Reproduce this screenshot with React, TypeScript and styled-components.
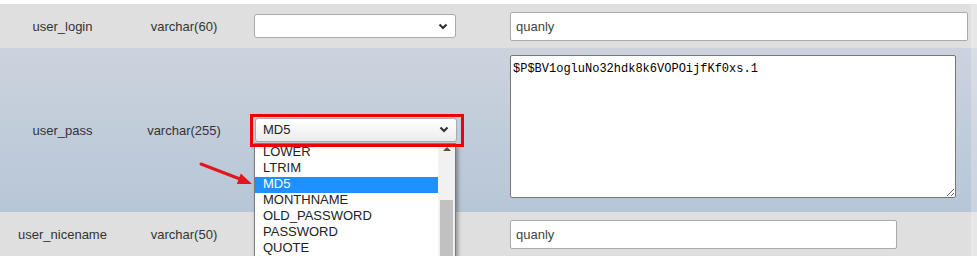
import styled, { createGlobalStyle } from 'styled-components';

const GlobalStyle = createGlobalStyle`
  html, body {
    margin: 0;
    padding: 0;
    background: #fff;
    overflow: hidden;
  }
  body {
    font-family: "Liberation Sans", Arial, sans-serif;
  }
`;

const Page = styled.div`
  width: 977px;
  padding-top: 4px;
`;

const Row = styled.div<{ $tall?: boolean }>`
  position: relative;
  display: grid;
  grid-template-columns: 125px 118px 255px 473px 6px;
  align-items: center;
  height: ${(p) => (p.$tall ? 164 : 44)}px;
  background: ${(p) => (p.$tall ? 'linear-gradient(#ccd3dd, #b7c6d7)' : '#dfdfdf')};
`;

const TextCell = styled.div`
  text-align: center;
  font-size: 13px;
  color: #333;
`;

const FuncCell = styled.div`
  position: relative;
  align-self: stretch;
  display: flex;
  align-items: center;
  padding-left: 11px;
`;

const ValueCell = styled.div<{ $top?: boolean }>`
  align-self: ${(p) => (p.$top ? 'start' : 'center')};
  padding-left: 12px;
  padding-top: ${(p) => (p.$top ? 7 : 0)}px;
`;

const EdgeCell = styled.div`
  align-self: stretch;
  background: rgba(255, 255, 255, 0.25);
`;

const SelectBox = styled.div<{ $open?: boolean }>`
  box-sizing: border-box;
  width: 202px;
  height: 24px;
  display: flex;
  align-items: center;
  justify-content: space-between;
  padding: 0 7px 0 7px;
  border: 1px solid #aaa;
  border-radius: 3px;
  background: ${(p) => (p.$open ? 'linear-gradient(#ffffff, #ececec)' : '#fff')};
  font-size: 13px;
  color: #222;
`;

const Highlight = styled.div`
  position: relative;
  z-index: 3;
  margin-left: -4px;
  padding: 1px 4px 2px 2px;
  border: 3px solid #ee0000;
`;

const Dropdown = styled.div`
  position: absolute;
  z-index: 2;
  left: 11px;
  top: 95px;
  width: 202px;
  height: 113px;
  box-sizing: border-box;
  display: flex;
  border: 1px solid #7a7a7a;
  border-bottom: none;
  background: #fff;
  box-shadow: 2px 3px 4px rgba(0, 0, 0, 0.35);
  overflow: hidden;
`;

const OptionList = styled.div`
  flex: 1;
  padding-top: 1px;
`;

const Option = styled.div<{ $selected?: boolean }>`
  height: 16px;
  line-height: 14px;
  padding-left: 8px;
  font-size: 13px;
  color: ${(p) => (p.$selected ? '#fff' : '#222')};
  background: ${(p) => (p.$selected ? '#1e90ff' : 'transparent')};
`;

const ScrollTrack = styled.div`
  width: 17px;
  display: flex;
  flex-direction: column;
  align-items: center;
  background: #f1f1f1;
`;

const ScrollArrow = styled.div`
  height: 17px;
  display: flex;
  align-items: center;
  justify-content: center;

  &::before {
    content: '';
    border-left: 4px solid transparent;
    border-right: 4px solid transparent;
    border-bottom: 4px solid #505050;
  }
`;

const ScrollThumb = styled.div`
  width: 13px;
  height: 100px;
  margin-top: 46px;
  background: #c1c1c1;
`;

const TextInput = styled.input<{ $width: number }>`
  box-sizing: border-box;
  display: block;
  width: ${(p) => p.$width}px;
  height: 29px;
  padding: 0 5px;
  border: 1px solid #aaa;
  border-radius: 2px;
  background: #fff;
  font-family: "Liberation Sans", Arial, sans-serif;
  font-size: 13px;
  color: #444;
  outline: none;
`;

const TextArea = styled.textarea`
  box-sizing: border-box;
  display: block;
  width: 446px;
  height: 143px;
  margin: 0;
  padding: 6px 2px;
  border: 1px solid #767676;
  border-radius: 2px;
  font-family: "Liberation Mono", "DejaVu Sans Mono", monospace;
  font-size: 12px;
  color: #000;
  resize: both;
  outline: none;
`;

const ArrowMark = styled.svg`
  position: absolute;
  left: 196px;
  top: 110px;
  width: 60px;
  height: 30px;
  pointer-events: none;
  z-index: 4;
`;

const Chevron = () => (
  <svg width="10" height="7" viewBox="0 0 10 7">
    <path d="M1.5 1.5 L5 5 L8.5 1.5" fill="none" stroke="#333" strokeWidth="2.2" />
  </svg>
);

const options = ['LOWER', 'LTRIM', 'MD5', 'MONTHNAME', 'OLD_PASSWORD', 'PASSWORD', 'QUOTE'];

export default function App() {
  return (
    <>
      <GlobalStyle />
      <Page>
        <Row>
          <TextCell>user_login</TextCell>
          <TextCell>varchar(60)</TextCell>
          <FuncCell>
            <SelectBox>
              <span />
              <Chevron />
            </SelectBox>
          </FuncCell>
          <ValueCell>
            <TextInput $width={458} defaultValue="quanly" readOnly />
          </ValueCell>
          <EdgeCell />
        </Row>

        <Row $tall>
          <TextCell>user_pass</TextCell>
          <TextCell>varchar(255)</TextCell>
          <FuncCell>
            <Highlight>
              <SelectBox $open>
                <span>MD5</span>
                <Chevron />
              </SelectBox>
            </Highlight>
            <Dropdown>
              <OptionList>
                {options.map((o) => (
                  <Option key={o} $selected={o === 'MD5'}>
                    {o}
                  </Option>
                ))}
              </OptionList>
              <ScrollTrack>
                <ScrollArrow />
                <ScrollThumb />
              </ScrollTrack>
            </Dropdown>
          </FuncCell>
          <ValueCell $top>
            <TextArea defaultValue="$P$BV1ogluNo32hdk8k6VOPOijfKf0xs.1" readOnly />
          </ValueCell>
          <EdgeCell />
          <ArrowMark viewBox="0 0 60 30">
            <line x1="5" y1="6" x2="44" y2="21" stroke="#e3161d" strokeWidth="3" strokeLinecap="round" />
            <polygon points="56,26 40.8,26 44.8,15.6" fill="#e3161d" />
          </ArrowMark>
        </Row>

        <Row>
          <TextCell>user_nicename</TextCell>
          <TextCell>varchar(50)</TextCell>
          <FuncCell />
          <ValueCell>
            <TextInput $width={387} defaultValue="quanly" readOnly />
          </ValueCell>
          <EdgeCell />
        </Row>
      </Page>
    </>
  );
}
